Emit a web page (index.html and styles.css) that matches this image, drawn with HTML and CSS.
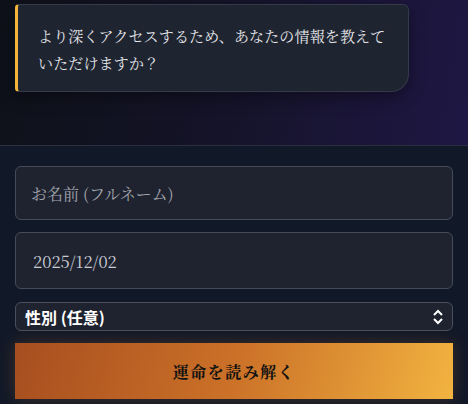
FILE: index.html
```html
<!DOCTYPE html>
<html lang="ja">
<head>
<meta charset="utf-8">
<link rel="stylesheet" href="styles.css">
</head>
<body>
<div class="chat">
  <div class="bubble">
    <p>より深くアクセスするため、あなたの情報を教えていただけますか？</p>
  </div>
</div>
<form class="form">
  <input class="field" type="text" placeholder="お名前 (フルネーム)">
  <div class="field date">2025/12/02</div>
  <div class="select">
    <span>性別 (任意)</span>
    <svg class="chev" width="12" height="16" viewBox="0 0 12 16"><path d="M2 6 L6 2 L10 6 M2 10 L6 14 L10 10" fill="none" stroke="#ffffff" stroke-width="2"/></svg>
  </div>
  <button class="submit" type="button">運命を読み解く</button>
</form>
</body>
</html>
```
FILE: styles.css
```css
* { box-sizing: border-box; }
html, body { margin: 0; padding: 0; }
body {
  width: 468px;
  height: 404px;
  overflow: hidden;
  background: #111827;
  font-family: "Noto Serif CJK JP", "Noto Sans CJK JP", serif;
}
.chat {
  height: 146px;
  padding: 4px 0 0 15px;
  background: linear-gradient(100deg, #0e1119 0%, #141327 45%, #1f1744 100%);
  border-bottom: 1px solid #2a2f3e;
}
.bubble {
  width: 394px;
  height: 88px;
  background: #1f2431;
  border: 1px solid #343a49;
  border-left: 3px solid #f5b53a;
  border-radius: 4px 6px 18px 4px;
  padding: 17px 14px 0 20px;
  box-shadow: 0 6px 16px rgba(0,0,0,0.35);
}
.bubble p {
  margin: 0;
  color: #e5e7eb;
  font-size: 15px;
  line-height: 27px;
  letter-spacing: 0.15px;
}
.form {
  display: flex;
  flex-direction: column;
  gap: 12px;
  padding: 20px 15px 0 15px;
}
.field {
  display: block;
  width: 438px;
  height: 54px;
  background: #1f2330;
  border: 1px solid #464b58;
  border-radius: 6px;
  padding: 0 15px;
  color: #c9ccd3;
  font-family: "Noto Serif CJK JP", "Noto Sans CJK JP", serif;
  font-size: 16px;
  outline: none;
}
.field::placeholder { color: #a2a5ad; }
.date {
  height: 57px;
  display: flex;
  align-items: center;
  padding-left: 17px;
  font-size: 16.5px;
}
.select {
  margin-top: 1px;
  height: 29px;
  display: flex;
  align-items: center;
  justify-content: space-between;
  background: #1f2330;
  border: 1px solid #4a4f5c;
  border-radius: 6px;
  padding: 0 8px 0 9px;
  color: #ffffff;
  font-family: "Noto Sans CJK JP", sans-serif;
  font-weight: 700;
  font-size: 16px;
}
.submit {
  height: 56px;
  border: none;
  border-radius: 0;
  background: linear-gradient(105deg, #a74e20 0%, #cb7128 50%, #f2b340 100%);
  box-shadow: 0 0 16px rgba(205,120,50,0.25);
  color: #111111;
  font-family: "Noto Serif CJK JP", "Noto Sans CJK JP", serif;
  font-weight: 700;
  font-size: 16px;
  letter-spacing: 1.5px;
}
```
